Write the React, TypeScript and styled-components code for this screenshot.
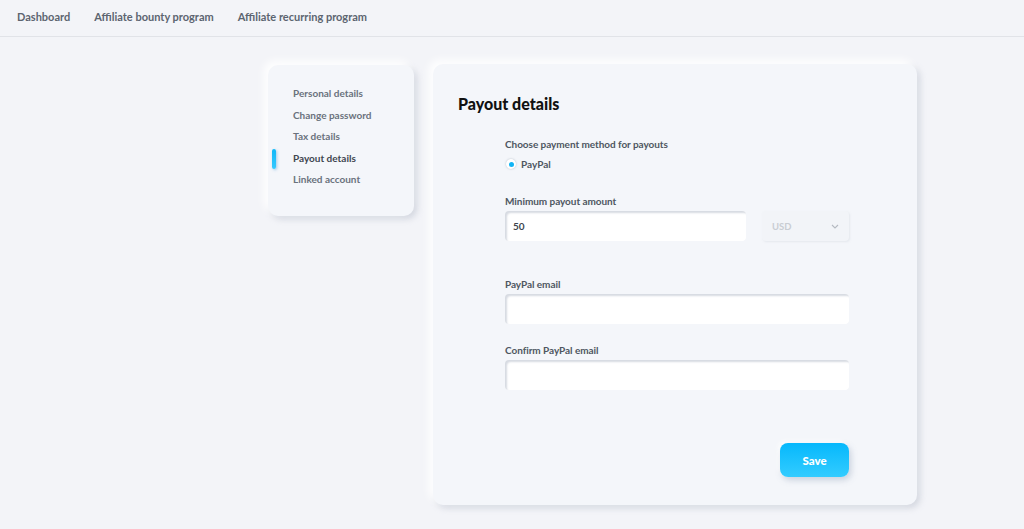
import { FC } from 'react';
import styled, { createGlobalStyle } from 'styled-components';

const GlobalStyle = createGlobalStyle`
    body {
        margin: 0;
        background: #f3f4f8;
        font-family: Lato, "Open Sans", sans-serif;
        color: #5b6470;
    }
`;

const Page = styled.div`
    min-height: 529px;
    background: #f3f4f8;
`;

const TopNav = styled.nav`
    height: 37px;
    box-sizing: border-box;
    display: flex;
    align-items: center;
    gap: 24px;
    padding: 0 17px 3px;
    border-bottom: 1px solid #e1e3e8;
`;

const NavLink = styled.a`
    font-size: 11px;
    font-weight: 700;
    color: #5c6470;
    text-decoration: none;
`;

const Layout = styled.div`
    display: flex;
    align-items: flex-start;
    gap: 19px;
    padding: 28px 0 0 268px;
`;

const Card = styled.div`
    background: #f4f6fa;
    border-radius: 10px;
    box-shadow: -4px -4px 8px #ffffff, 3px 3px 6px rgba(170, 178, 192, 0.45);
`;

const Sidebar = styled(Card)`
    width: 146px;
    height: 151px;
    box-sizing: border-box;
    padding: 21px 0 0 0;
    display: flex;
    flex-direction: column;
    gap: 6px;
`;

const SideItem = styled.div<{ $active?: boolean }>`
    position: relative;
    padding-left: 25px;
    font-size: 10px;
    line-height: 15.5px;
    font-weight: 700;
    color: ${p => (p.$active ? '#3f4650' : '#6a727d')};
`;

const ActiveBar = styled.span`
    position: absolute;
    left: 4px;
    top: -2px;
    width: 4px;
    height: 20px;
    border-radius: 2px;
    background: linear-gradient(180deg, #0fb7f7, #35c9ff);
    box-shadow: 1px 1px 3px rgba(0, 120, 200, 0.35);
`;

const Main = styled(Card)`
    width: 484px;
    height: 441px;
    box-sizing: border-box;
    padding: 30px 68px 0 25px;
    margin-top: -1px;
    display: flex;
    flex-direction: column;
`;

const Title = styled.h1`
    margin: 0;
    font-size: 16px;
    font-weight: 900;
    color: #111;
    line-height: 20px;
`;

const Form = styled.div`
    margin: 23px 0 0 47px;
    display: flex;
    flex-direction: column;
`;

const Label = styled.div<{ $gap?: number }>`
    font-size: 10px;
    letter-spacing: -0.05px;
    font-weight: 700;
    color: #4e5661;
    line-height: 14px;
    margin-bottom: ${p => p.$gap ?? 3}px;
`;

const RadioRow = styled.label`
    display: flex;
    align-items: center;
    gap: 5px;
    margin-left: 1px;
    font-size: 10px;
    font-weight: 700;
    color: #4e5661;
`;

const RadioDot = styled.span`
    width: 10px;
    height: 10px;
    border-radius: 50%;
    background: #ffffff;
    box-shadow: 0 0 2px rgba(150, 160, 175, 0.7);
    display: flex;
    align-items: center;
    justify-content: center;
    &::after {
        content: '';
        width: 5px;
        height: 5px;
        border-radius: 50%;
        background: #12b4f5;
    }
`;

const Field = styled.div<{ $top: number }>`
    margin-top: ${p => p.$top}px;
`;

const Row = styled.div`
    display: flex;
    gap: 16px;
`;

const Input = styled.div<{ $width?: number }>`
    height: 30px;
    width: ${p => (p.$width ? `${p.$width}px` : '100%')};
    box-sizing: border-box;
    background: #ffffff;
    border-radius: 4px;
    box-shadow: inset 2px 2px 2px rgba(180, 188, 200, 0.55);
    padding: 0 8px;
    display: flex;
    align-items: center;
    font-size: 10px;
    font-weight: 700;
    color: #3d444e;
`;

const Select = styled.div`
    height: 30px;
    width: 87px;
    box-sizing: border-box;
    border-radius: 4px;
    background: #f2f4f8;
    box-shadow: 1px 1px 2px rgba(200, 205, 215, 0.35);
    padding: 0 10px;
    display: flex;
    align-items: center;
    justify-content: space-between;
    font-size: 9.5px;
    font-weight: 700;
    color: #c9cdd3;
`;

const Actions = styled.div`
    display: flex;
    justify-content: flex-end;
    margin-top: 53px;
`;

const SaveButton = styled.button`
    width: 69px;
    height: 34px;
    border: none;
    border-radius: 8px;
    background: linear-gradient(180deg, #06b8fc, #33ccff);
    box-shadow: 2px 3px 6px rgba(120, 140, 170, 0.35), -2px -2px 4px #ffffff;
    color: #ffffff;
    font-family: inherit;
    font-size: 11.5px;
    font-weight: 900;
`;

const sideItems = ['Personal details', 'Change password', 'Tax details', 'Payout details', 'Linked account'];

const App: FC = () => {
    return (
        <Page>
            <GlobalStyle />
            <TopNav>
                <NavLink href="#">Dashboard</NavLink>
                <NavLink href="#">Affiliate bounty program</NavLink>
                <NavLink href="#">Affiliate recurring program</NavLink>
            </TopNav>
            <Layout>
                <Sidebar>
                    {sideItems.map(item => (
                        <SideItem key={item} $active={item === 'Payout details'}>
                            {item === 'Payout details' && <ActiveBar />}
                            {item}
                        </SideItem>
                    ))}
                </Sidebar>
                <Main>
                    <Title>Payout details</Title>
                    <Form>
                        <Label $gap={7}>Choose payment method for payouts</Label>
                        <RadioRow>
                            <RadioDot />
                            PayPal
                        </RadioRow>
                        <Field $top={24}>
                            <Label>Minimum payout amount</Label>
                            <Row>
                                <Input $width={241}>50</Input>
                                <Select>
                                    USD
                                    <svg width="8" height="5" viewBox="0 0 8 5">
                                        <path d="M1 1l3 3 3-3" fill="none" stroke="#b5bac2" strokeWidth="1.1" />
                                    </svg>
                                </Select>
                            </Row>
                        </Field>
                        <Field $top={36}>
                            <Label>PayPal email</Label>
                            <Input />
                        </Field>
                        <Field $top={19}>
                            <Label>Confirm PayPal email</Label>
                            <Input />
                        </Field>
                        <Actions>
                            <SaveButton>Save</SaveButton>
                        </Actions>
                    </Form>
                </Main>
            </Layout>
        </Page>
    );
};

export default App;
